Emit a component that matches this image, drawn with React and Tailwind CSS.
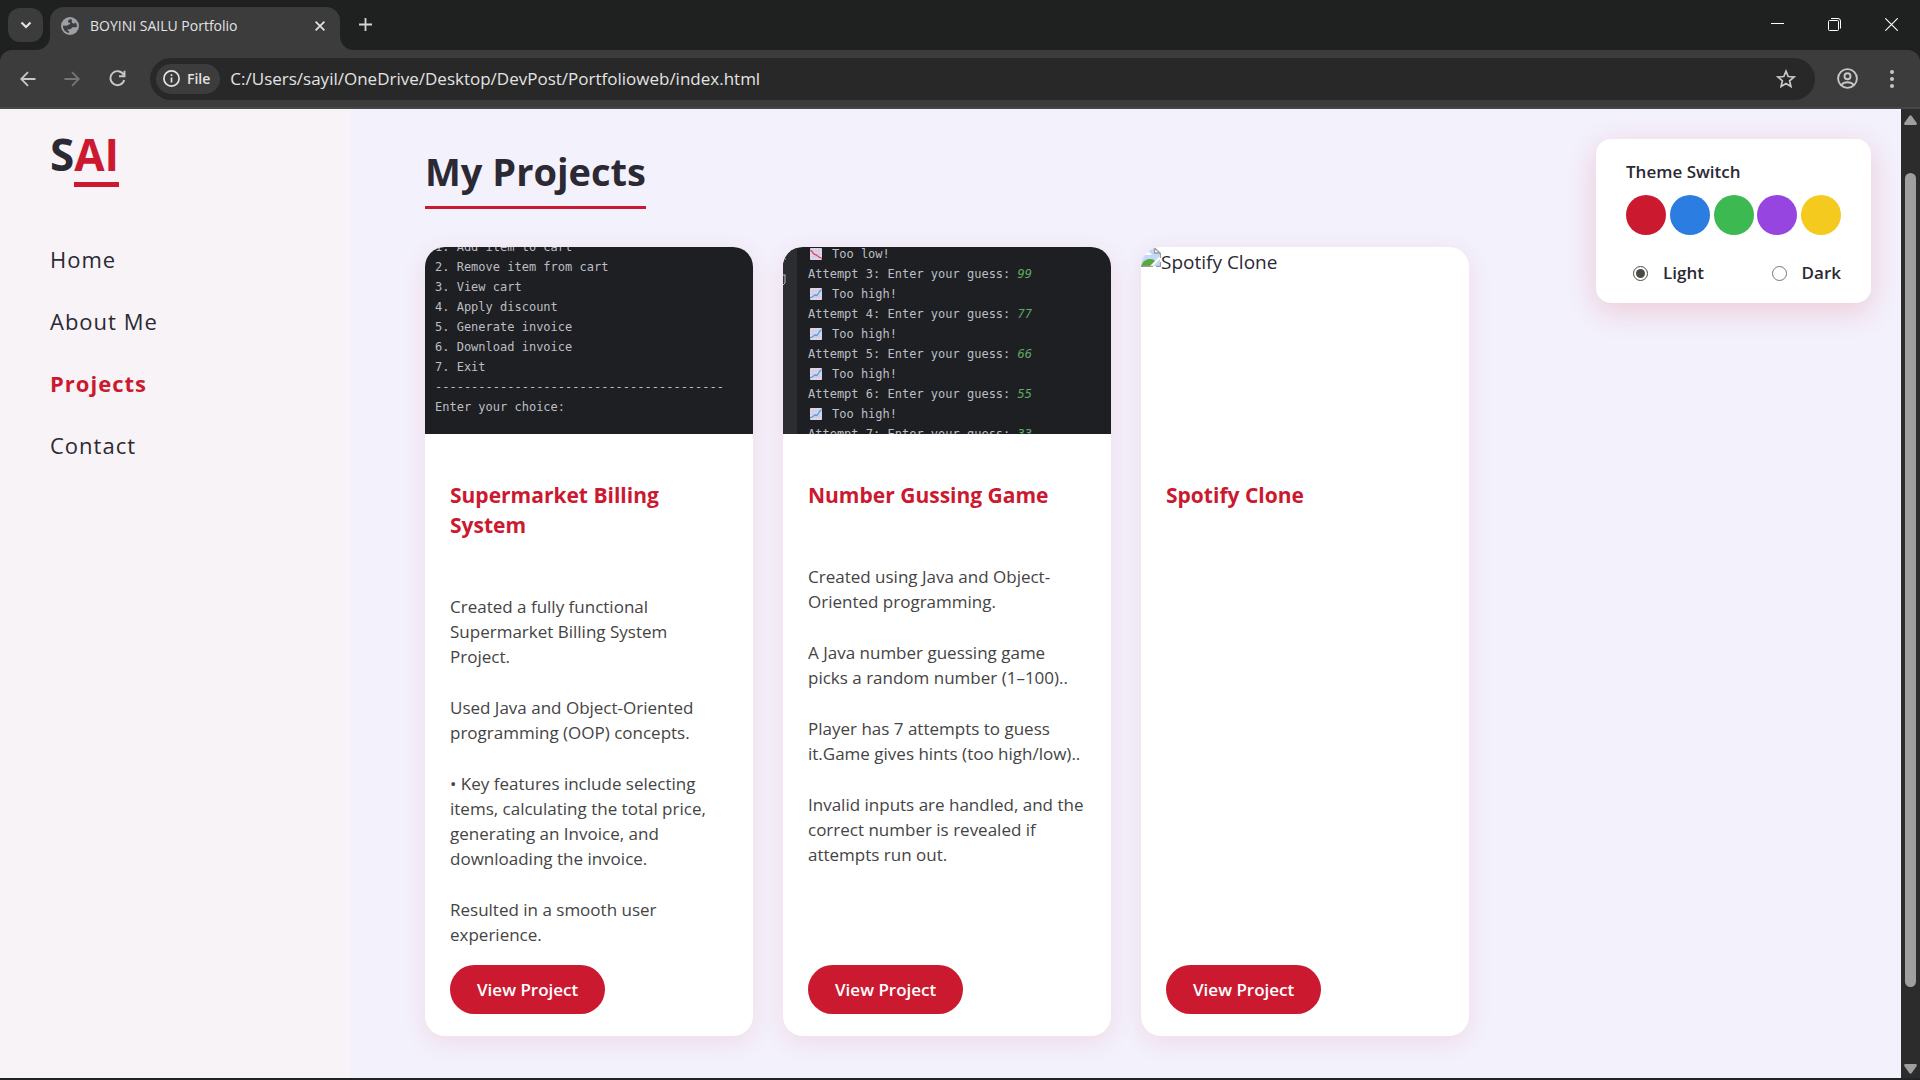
import React, { useState } from "react";

const SANS = "font-['Open_Sans','Noto_Sans',sans-serif]";
const MONO = "font-['DejaVu_Sans_Mono',monospace]";

function Globe() {
  return (
    <svg viewBox="0 0 18 18" className="size-[18px] shrink-0" aria-hidden="true">
      <circle cx="9" cy="9" r="9" fill="#9aa0a6" />
      <path
        d="M10.400 2c-2 .1-3.300 1.100-3.400 2.300 0 1.100.9 1.400 2.200 1.500.2.900-.3 1.600-1.100 1.800-1.100.3-1.500 1.100-2.700 1.100L2 8.600C1.800 12.300 4.300 15.600 8 16v-1.800c-.9-.3-1.600-.9-1.600-1.800l2.800-.1c.9-.2 1-1 1.600-1.600.8-.7 1.700-.6 2.600-.4.900.1 1.700 0 2.500-.2.200-1.700-.3-3.300-1.200-4.600-.6.8-1.600 1.200-2.600.9-1.200-.4-1.500-1.400-1.200-2.500z"
        fill="#3c3c3c"
      />
    </svg>
  );
}

function TabBar() {
  return (
    <header className="flex h-[50px] items-start bg-[#1f2120] text-[#e3e3e3]">
      <button aria-label="Search tabs" className="mt-2 ml-2 flex h-[34px] w-[35px] items-center justify-center rounded-xl bg-[#3c3c3c]">
        <svg viewBox="0 0 12 8" className="h-2 w-3" fill="none" stroke="#e3e3e3" strokeWidth="2.200">
          <path d="M1.500 1.500 6 6l4.500-4.500" />
        </svg>
      </button>
      <div className="relative mt-[7px] ml-[7px] flex h-[43px] w-[290px] items-center rounded-t-[14px] bg-[#3c3c3c] pb-[6px] pl-[11px] pr-[11px]">
        <svg viewBox="0 0 14 14" className="absolute bottom-0 -left-[14px] size-[14px]" fill="#3c3c3c">
          <path d="M14 0v14H0C8 14 14 8 14 0z" />
        </svg>
        <svg viewBox="0 0 14 14" className="absolute -right-[14px] bottom-0 size-[14px]" fill="#3c3c3c">
          <path d="M0 0v14h14C6 14 0 8 0 0z" />
        </svg>
        <Globe />
        <span className="ml-[11px] flex-1 text-[14px] leading-5">BOYINI SAILU Portfolio</span>
        <button aria-label="Close tab" className="p-1">
          <svg viewBox="0 0 10 10" className="size-[10px]" stroke="#e3e3e3" strokeWidth="1.700">
            <path d="M.6.6l8.800 8.800M9.400.6.6 9.400" />
          </svg>
        </button>
      </div>
      <button aria-label="New tab" className="mt-[18px] ml-[19px]">
        <svg viewBox="0 0 13 13" className="size-[13px]" stroke="#d5d5d5" strokeWidth="1.800">
          <path d="M6.500 0v13M0 6.500h13" />
        </svg>
      </button>
      <div className="mt-[18px] mr-[22px] ml-auto flex gap-11">
        <button aria-label="Minimize">
          <svg viewBox="0 0 13 13" className="size-[13px]" stroke="#fff">
            <path d="M0 5.500h13" />
          </svg>
        </button>
        <button aria-label="Restore">
          <svg viewBox="0 0 13 13" className="size-[13px]" stroke="#fff" fill="none">
            <path d="M3 .5h7A2.500 2.500 0 0 1 12.500 3v7.500" />
            <rect x=".5" y="2.500" width="10" height="10" rx="1" />
          </svg>
        </button>
        <button aria-label="Close">
          <svg viewBox="0 0 13 13" className="size-[13px]" stroke="#fff" strokeWidth="1.100">
            <path d="M.3.300l12.400 12.400M12.700.300.300 12.700" />
          </svg>
        </button>
      </div>
    </header>
  );
}

function Toolbar() {
  return (
    <div className="bg-[#1f2120]">
      <div className="flex h-[59px] items-center rounded-t-xl border-b-2 border-[#474747] bg-[#3c3c3c]">
        <button aria-label="Back" className="ml-5">
          <svg viewBox="0 0 16 16" className="size-4" fill="none" stroke="#c7c7c7" strokeWidth="1.800">
            <path d="M15.500 8H1.500M8 1.200 1.200 8 8 14.800" />
          </svg>
        </button>
        <button aria-label="Forward" className="ml-7">
          <svg viewBox="0 0 16 16" className="size-4" fill="none" stroke="#757575" strokeWidth="1.800">
            <path d="M.5 8h14M8 1.200 14.800 8 8 14.800" />
          </svg>
        </button>
        <button aria-label="Reload" className="ml-[29px]">
          <svg viewBox="0 0 17 17" className="size-[17px]" fill="none" stroke="#c7c7c7" strokeWidth="1.900">
            <path d="M14.600 4.800A7 7 0 1 0 15.200 10M15.500.8v5.400H10" />
          </svg>
        </button>
        <div className="ml-6 flex h-[42px] flex-1 items-center rounded-full bg-[#282828] pl-[6px] pr-[19px]">
          <button className="flex h-[30px] items-center gap-[7px] rounded-full bg-[#3c3c3c] pl-[7px] pr-[10px] text-[14px] font-semibold text-[#e3e3e3]">
            <svg viewBox="0 0 17 17" className="size-[17px]" fill="none" stroke="#e3e3e3" strokeWidth="1.700">
              <circle cx="8.500" cy="8.500" r="7.600" />
              <path d="M8.500 7.500v5M8.500 4.200v1.900" />
            </svg>
            File
          </button>
          <input
            aria-label="Address"
            defaultValue="C:/Users/sayil/OneDrive/Desktop/DevPost/Portfolioweb/index.html"
            className="ml-[10px] min-w-0 flex-1 bg-transparent text-[17px] text-[#e3e3e3] outline-none"
          />
          <button aria-label="Bookmark this page">
            <svg viewBox="0 0 20 20" className="size-5" fill="none" stroke="#c7c7c7" strokeWidth="1.700">
              <path d="M10 2.200l2.200 5.300 5.800.5-4.400 3.800 1.300 5.600L10 14.500l-4.900 2.900 1.300-5.600L2 8l5.800-.5z" />
            </svg>
          </button>
        </div>
        <button aria-label="Profile" className="ml-[22px]">
          <svg viewBox="0 0 21 21" className="size-[21px]" fill="none" stroke="#c7c7c7" strokeWidth="1.900">
            <circle cx="10.500" cy="10.500" r="9.400" />
            <circle cx="10.500" cy="8.300" r="3" />
            <path d="M4.300 17c1.600-2 3.800-2.800 6.200-2.800s4.600.8 6.200 2.800" />
          </svg>
        </button>
        <button aria-label="Menu" className="mr-[26px] ml-[32px]">
          <svg viewBox="0 0 4 18" className="h-[18px] w-1" fill="#c7c7c7">
            <circle cx="2" cy="2" r="2" />
            <circle cx="2" cy="9" r="2" />
            <circle cx="2" cy="16" r="2" />
          </svg>
        </button>
      </div>
    </div>
  );
}

const NAV = ["Home", "About Me", "Projects", "Contact"];

function Sidebar() {
  return (
    <aside className="w-[350px] shrink-0 bg-[#f8f3f7] pl-[50px]">
      <a href="#home" className="mt-[17px] inline-flex text-[44px] leading-[56px] font-bold text-[#2b2933]">
        S<span className="border-b-[5px] border-[#cb1930] text-[#cb1930]">AI</span>
      </a>
      <nav className="mt-[57px] flex flex-col items-start gap-8 text-[22px] leading-[30px] font-medium tracking-[1px] text-[#2b2933]">
        {NAV.map((item) => (
          <a key={item} href={"#" + item} className={item === "Projects" ? "font-bold text-[#cb1930]" : ""}>
            {item}
          </a>
        ))}
      </nav>
    </aside>
  );
}

const MENU = [
  "1. Add item to cart",
  "2. Remove item from cart",
  "3. View cart",
  "4. Apply discount",
  "5. Generate invoice",
  "6. Download invoice",
  "7. Exit",
  "----------------------------------------",
  "Enter your choice:",
];

function BillingShot() {
  return (
    <div className={`flex h-[187px] flex-col justify-end overflow-hidden bg-[#1e1f22] pb-[17px] pl-[10px] text-[12px] leading-5 whitespace-pre text-[#bcbec4] ${MONO}`}>
      {MENU.map((line) => (
        <div key={line}>{line}</div>
      ))}
    </div>
  );
}

function ChartIcon({ down }) {
  return (
    <svg viewBox="0 0 12 12" className="size-3">
      <rect width="12" height="12" rx="1" fill="#e3dbea" />
      <path d="M3 0v12M6 0v12M9 0v12M0 3h12M0 6h12M0 9h12" stroke="#c9bdd6" strokeWidth=".6" />
      {down ? (
        <path d="M.5 2l4 4.500 2 .5 2.500 2L12 10.500" fill="none" stroke="#e0436f" strokeWidth="1.300" />
      ) : (
        <path d="M0 10l3-1.500L5 7l2 .5L9 4.500 11.500 1.500" fill="none" stroke="#4aa3e8" strokeWidth="1.300" />
      )}
    </svg>
  );
}

function Hint({ down, children }) {
  return (
    <div className="flex items-center gap-[10px] pl-[2px]">
      <ChartIcon down={down} />
      {children}
    </div>
  );
}

const GUESSES = [[3, 99], [4, 77], [5, 66], [6, 55], [7, 33]];

function GuessingShot() {
  return (
    <div className={`flex h-[187px] overflow-hidden bg-[#1e1f22] text-[12px] leading-5 whitespace-pre text-[#bcbec4] ${MONO}`}>
      <div className="w-[14px] shrink-0 bg-[#2b2d30]">
        <svg viewBox="0 0 14 60" className="h-[60px] w-[14px]" fill="none" stroke="#bcbec4">
          <path d="M0 12h3M0 28h2.500M2 28v8L0 38" />
        </svg>
      </div>
      <div className="-mt-[3px] pl-[11px]">
        <Hint down>Too low!</Hint>
        {GUESSES.map(([n, guess]) => (
          <div key={n}>
            <div>
              Attempt {n}: Enter your guess: <i className="text-[#5fa867]">{guess}</i>
            </div>
            {n < 7 && <Hint>Too high!</Hint>}
          </div>
        ))}
      </div>
    </div>
  );
}

function MissingShot() {
  return (
    <div className="flex h-[187px] items-start text-[19px] leading-[30px] text-[#2b2933]">
      <svg viewBox="0 0 20 20" className="size-5 shrink-0">
        <path d="M0 1h13v5h6v13H0z" fill="#c3d9f7" />
        <path d="M2 7c1-3 6-3 7-1 2 0 2 2 0 2H3C1.500 8 1.500 7 2 7z" fill="#fff" />
        <path d="M0 19c2-5 5-7 9-7 3 0 5 1 5 3l-3 4z" fill="#58a83a" />
        <path d="M11 20l9-9V8L8 20z" fill="#fff" />
        <path d="M13.500 1v5h5.500zM19.500 6v5M0 19.300h12M15 19.300h4.500V15" fill="none" stroke="#9b9b9b" strokeWidth="1.300" />
      </svg>
      Spotify Clone
    </div>
  );
}

const PROJECTS = [
  {
    title: "Supermarket Billing System",
    Shot: BillingShot,
    text: [
      "Created a fully functional Supermarket Billing System Project.",
      "Used Java and Object-Oriented programming (OOP) concepts.",
      "• Key features include selecting items, calculating the total price, generating an Invoice, and downloading the invoice.",
      "Resulted in a smooth user experience.",
    ],
  },
  {
    title: "Number Gussing Game",
    Shot: GuessingShot,
    text: [
      "Created using Java and Object-Oriented programming.",
      "A Java number guessing game picks a random number (1–100)..",
      "Player has 7 attempts to guess it.Game gives hints (too high/low)..",
      "Invalid inputs are handled, and the correct number is revealed if attempts run out.",
    ],
  },
  { title: "Spotify Clone", Shot: MissingShot, text: [] },
];

function Card({ title, Shot, text }) {
  return (
    <article className="flex flex-col overflow-hidden rounded-[20px] bg-white shadow-[0_6px_25px_rgba(203,25,48,0.1)]">
      <Shot />
      <div className="flex flex-1 flex-col items-start px-[25px] pt-[46px] pb-[22px]">
        <h2 className="text-[21px] leading-[30px] font-bold text-[#cb1930]">{title}</h2>
        <div className="mt-[54px] mb-[18px] flex flex-col gap-[26px] text-[17px] leading-[25px] text-[#444]">
          {text.map((p) => (
            <p key={p}>{p}</p>
          ))}
        </div>
        <a href="#project" className="mt-auto flex h-[49px] items-center rounded-full bg-[#cb1930] px-[27px] text-[17px] font-semibold text-white">
          View Project
        </a>
      </div>
    </article>
  );
}

const SWATCHES = [
  ["Red", "bg-[#cb1930]"],
  ["Blue", "bg-[#2b7de1]"],
  ["Green", "bg-[#3cb950]"],
  ["Purple", "bg-[#9745e0]"],
  ["Yellow", "bg-[#f4ca1e]"],
];

function ThemePanel() {
  const [mode, setMode] = useState("Light");
  return (
    <section className="mt-[30px] mr-[30px] w-[275px] shrink-0 self-start rounded-[15px] bg-white px-[30px] pt-5 pb-[17px] text-[#2b2933] shadow-[0_8px_30px_rgba(203,25,48,0.18)]">
      <h2 className="text-[17px] leading-[26px] font-semibold">Theme Switch</h2>
      <div className="mt-[10px] flex justify-between">
        {SWATCHES.map(([name, color]) => (
          <button key={name} aria-label={name} className={`size-10 rounded-full ${color}`} />
        ))}
      </div>
      <div className="mt-[25px] flex justify-between pl-[7px] text-[17px] leading-[26px] font-semibold">
        {["Light", "Dark"].map((m) => (
          <label key={m} className="flex items-center gap-[15px]">
            <input
              type="radio"
              name="mode"
              checked={mode === m}
              onChange={() => setMode(m)}
              className="size-[15px] appearance-none rounded-full border border-[#767676] bg-white bg-clip-content p-[2px] checked:border-[#4b4a47] checked:bg-[#4b4a47]"
            />
            {m}
          </label>
        ))}
      </div>
    </section>
  );
}

function Scrollbar() {
  return (
    <div className="flex w-[19px] shrink-0 flex-col items-center bg-[#2c2c2c] pt-[6px] pb-1" aria-hidden="true">
      <svg viewBox="0 0 13 10" className="h-[10px] w-[13px]" fill="#9f9f9f">
        <path d="M5.300 1q1.200-1.600 2.400 0l5 7q.6 2-1.200 2h-10Q-.3 10 .3 8z" />
      </svg>
      <div className="mt-[48px] mb-[77px] w-[11px] flex-1 rounded-full bg-[#9f9f9f]" />
      <svg viewBox="0 0 13 10" className="h-[10px] w-[13px]" fill="#9f9f9f">
        <path d="M5.300 9q1.200 1.600 2.400 0l5-7q.6-2-1.200-2h-10Q-.3 0 .3 2z" />
      </svg>
    </div>
  );
}

export default function App() {
  return (
    <div className={`flex min-h-screen flex-col bg-[#202224] ${SANS}`}>
      <TabBar />
      <Toolbar />
      <div className="mb-[2px] flex flex-1">
        <Sidebar />
        <div className="flex flex-1 bg-[#f3f1fc]">
          <main className="flex-1 pt-[34px] pr-[127px] pb-[40px] pl-[75px]">
            <h1 className="inline-block border-b-[3px] border-[#cb1930] pb-[7px] align-top text-[38px] leading-[56px] font-bold text-[#2b2933]">
              My Projects
            </h1>
            <div className="mt-[38px] grid grid-cols-3 gap-[30px]">
              {PROJECTS.map((p) => (
                <Card key={p.title} {...p} />
              ))}
            </div>
          </main>
          <ThemePanel />
        </div>
        <Scrollbar />
      </div>
    </div>
  );
}
